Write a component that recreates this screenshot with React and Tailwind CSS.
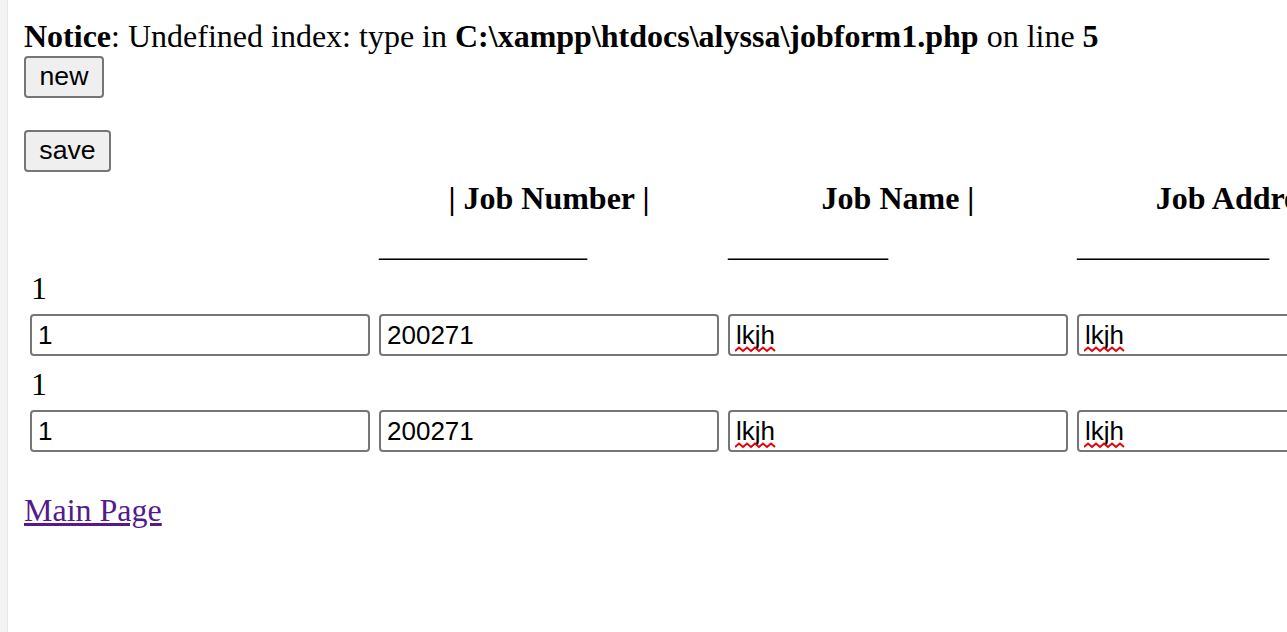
import React from "react";

const serif = { fontFamily: '"Liberation Serif", "Times New Roman", serif' };

const columns = [
  { head: "", line: "", value: "1" },
  { head: "| Job Number |", line: "_____________", value: "200271" },
  { head: "Job Name |", line: "__________", value: "lkjh", misspelled: true },
  { head: "Job Address |", line: "____________", value: "lkjh", misspelled: true },
];

function Squiggle() {
  // red spell-check wave under a word
  let d = "M0 5";
  for (let x = 0; x < 40; x += 8) {
    d += ` L${x + 4} 1.5 L${x + 8} 5`;
  }
  return (
    <svg
      width="41"
      height="7"
      viewBox="0 0 41 7"
      className="absolute left-[7px] top-[32px] pointer-events-none"
    >
      <path d={d} fill="none" stroke="#e5000b" strokeWidth="2" />
    </svg>
  );
}

function Field({ col }) {
  return (
    <div className="relative">
      <input
        type="text"
        defaultValue={col.value}
        spellCheck={false}
        className="w-[340px] h-[42px] border-2 border-[#767676] rounded-[4px] bg-white pl-[6px] pr-1 text-[26px] text-black outline-none font-['Liberation_Sans',Arial,sans-serif]"
      />
      {col.misspelled && <Squiggle />}
    </div>
  );
}

function Button({ children, width }) {
  return (
    <button
      className={`${width} h-[42px] border-2 border-[#767676] rounded-[4px] bg-[#efefef] text-[26.67px] leading-none text-black font-['Liberation_Sans',Arial,sans-serif] flex items-center justify-center pb-[2px]`}
    >
      {children}
    </button>
  );
}

export default function App() {
  const rows = [0, 1];

  return (
    <div className="min-h-screen w-full flex bg-white overflow-hidden text-black" style={serif}>
      <div className="w-[8px] shrink-0 bg-[#f3f3f3] border-r border-[#e6e6e6]" />
      <div className="flex-1 pl-[16px] pt-[17px] min-w-0">
        <p className="h-[37px] text-[32px] leading-[39px] whitespace-nowrap">
          <b>Notice</b>: Undefined index: type in <b>C:\xampp\htdocs\alyssa\jobform1.php</b> on line <b>5</b>
        </p>

        <div className="mt-[2px]">
          <Button width="w-[80px]">new</Button>
        </div>
        <div className="mt-[32px]">
          <Button width="w-[87px]">save</Button>
        </div>

        <div className="ml-[6px] mt-[7px] w-max">
          <div className="grid grid-cols-[340px_340px_340px_340px] gap-x-[9px] h-[37px] text-[32px] leading-[39px] font-bold">
            {columns.map((c, i) => (
              <div key={i} className="text-center whitespace-nowrap">
                {c.head}
              </div>
            ))}
          </div>
          <div className="grid grid-cols-[340px_340px_340px_340px] gap-x-[9px] mt-[10px] h-[37px] text-[32px] leading-[39px]">
            {columns.map((c, i) => (
              <div key={i} className="whitespace-nowrap">
                {c.line}
              </div>
            ))}
          </div>

          {rows.map((r) => (
            <div key={r}>
              <div className={`${r === 0 ? "mt-[5px]" : "mt-[8px]"} h-[37px] text-[32px] leading-[41px] pl-[1px]`}>1</div>
              <div className="grid grid-cols-[340px_340px_340px_340px] gap-x-[9px] mt-[9px]">
                {columns.map((c, i) => (
                  <Field key={i} col={c} />
                ))}
              </div>
            </div>
          ))}
        </div>

        <a href="#" className="block w-max mt-[39px] h-[37px] text-[32px] leading-[39px] text-[#551a8b] underline">
          Main Page
        </a>
      </div>
    </div>
  );
}
